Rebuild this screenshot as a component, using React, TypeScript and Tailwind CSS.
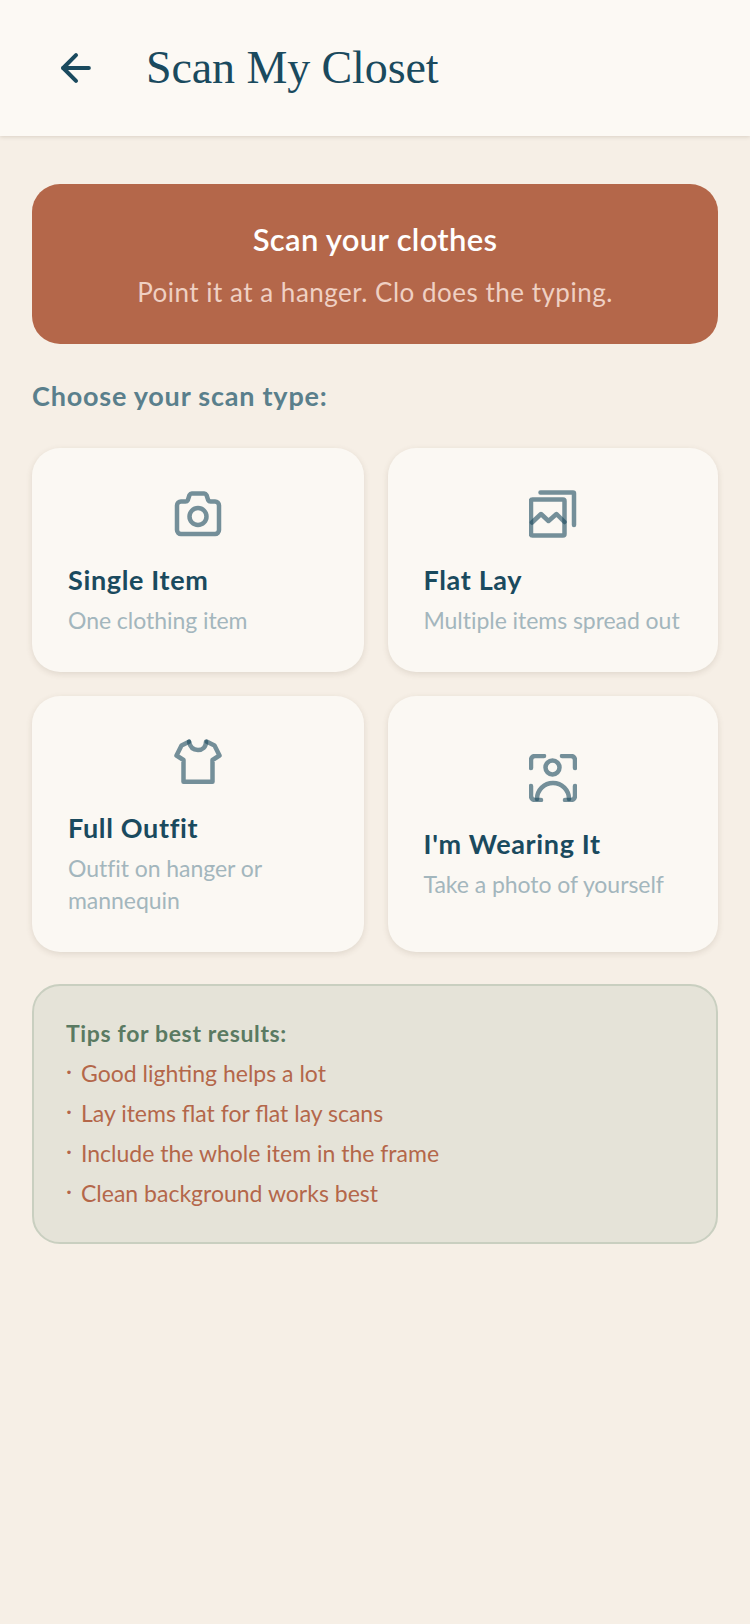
import { ArrowLeft } from 'lucide-react';
import React from 'react';

const ICON_STYLE = {
  fill: 'none',
  stroke: '#1a4a5e',
  strokeOpacity: 0.6,
  strokeWidth: 4.5,
  strokeLinecap: 'round',
  strokeLinejoin: 'round',
} as const;

const CameraIcon = () => (
  <svg width="48" height="48" viewBox="0 0 48 48" {...ICON_STYLE}>
    <path d="M7 11.5h4.5c1 0 1.8-.5 2.300-1.400L15.500 5c.5-.9 1.300-1.500 2.300-1.500h12.400c1 0 1.800.6 2.300 1.500l1.700 5.100c.5.9 1.300 1.400 2.300 1.400H41c2.200 0 4 1.800 4 4V40c0 2.200-1.800 4-4 4H7c-2.200 0-4-1.800-4-4V15.500c0-2.200 1.800-4 4-4z" />
    <circle cx="24" cy="26.500" r="8.500" />
  </svg>
);

const GalleryIcon = () => (
  <svg width="48" height="48" viewBox="0 0 48 48" {...ICON_STYLE}>
    <rect x="2" y="9.500" width="33.500" height="36" rx="1.500" />
    <path d="M11.500 2.500H44a1 1 0 0 1 1 1V35" />
    <path d="M3 32.500 12 24l7.500 7 8-7 8 8" />
  </svg>
);

const ShirtIcon = () => (
  <svg width="48" height="48" viewBox="0 0 48 48" {...ICON_STYLE}>
    <path d="M15 3.700 7.500 7.500 2.500 17.500 9.500 22v21.700h29V22l7-4.500-5-10-7.500-3.800" />
    <path d="M15 3.700c1 5.500 4.500 8.300 9 8.300s8-2.800 8-8.300" />
  </svg>
);

const PersonScanIcon = () => (
  <svg width="48" height="48" viewBox="0 0 48 48" {...ICON_STYLE}>
    <path d="M2 14V6a4 4 0 0 1 4-4h9" />
    <path d="M33 2h9a4 4 0 0 1 4 4v8" />
    <path d="M2 32v10a4 4 0 0 0 4 4h6" />
    <path d="M46 32v10a4 4 0 0 1-4 4h-6" />
    <circle cx="23.500" cy="13.500" r="7" />
    <path d="M8 45a16 16 0 0 1 32 0" />
  </svg>
);

interface ScanCardProps {
  icon: React.ReactNode;
  title: string;
  description: string;
}

const ScanCard = ({ icon, title, description }: ScanCardProps) => {
  return (
    <div className="flex flex-col justify-center rounded-[28px] bg-[#fbf8f3] pt-[35px] pr-6 pb-9 pl-9 shadow-[0_2px_6px_rgba(90,70,50,0.14)]">
      <div className="mb-[18px] flex h-[61px] items-center justify-center pr-3">{icon}</div>
      <div className="text-[27px] leading-9 font-bold tracking-[0.65px] text-[#1a4a5e]">{title}</div>
      <div className="mt-1.5 text-[23px] leading-8 tracking-[-0.05px] text-[#a3b6bd]">{description}</div>
    </div>
  );
};

const tips = [
  'Good lighting helps a lot',
  'Lay items flat for flat lay scans',
  'Include the whole item in the frame',
  'Clean background works best',
];

export default function App() {
  return (
    <div className="min-h-[1624px] bg-[#f6efe6] font-['Lato','Liberation_Sans',sans-serif]">
      <header className="flex h-[136px] items-center bg-[#fcf9f4] pl-[54px] shadow-[0_1px_4px_rgba(90,70,50,0.18)]">
        <ArrowLeft size={44} strokeWidth={2.2} className="text-[#1a4a5e]" />
        <h1 className="ml-[48px] font-['Liberation_Serif',serif] text-[46px] leading-none tracking-[-0.1px] text-[#1a4a5e]">
          Scan My Closet
        </h1>
      </header>

      <main className="px-8 pt-12">
        <section className="rounded-[28px] bg-[#b4674a] pt-[35px] pb-9 text-center">
          <h2 className="text-[31px] leading-10 font-semibold tracking-[0.3px] text-white">Scan your clothes</h2>
          <p className="mt-[17px] text-[26px] leading-8 tracking-[0.5px] text-[#efd0c3]">
            Point it at a hanger. Clo does the typing.
          </p>
        </section>

        <h3 className="mt-[34px] mb-[34px] text-[27px] leading-9 font-bold tracking-[0.78px] text-[#5a7f8c]">
          Choose your scan type:
        </h3>

        <div className="grid grid-cols-[331.5px_330.5px] gap-6">
          <ScanCard icon={<CameraIcon />} title="Single Item" description="One clothing item" />
          <ScanCard icon={<GalleryIcon />} title="Flat Lay" description="Multiple items spread out" />
          <ScanCard icon={<ShirtIcon />} title="Full Outfit" description="Outfit on hanger or mannequin" />
          <ScanCard icon={<PersonScanIcon />} title="I'm Wearing It" description="Take a photo of yourself" />
        </div>

        <section className="mt-8 rounded-[28px] border-2 border-[#c9cfc0] bg-[#e5e3d8] px-8 pt-[27px] pb-[29px]">
          <div className="text-[23px] leading-10 font-bold tracking-[0.65px] text-[#5a7a62]">Tips for best results:</div>
          {tips.map((tip) => (
            <div key={tip} className="flex text-[23px] leading-10 text-[#b4674a]">
              <span className="w-[15px] leading-[34px]">·</span>
              <span>{tip}</span>
            </div>
          ))}
        </section>
      </main>
    </div>
  );
}
